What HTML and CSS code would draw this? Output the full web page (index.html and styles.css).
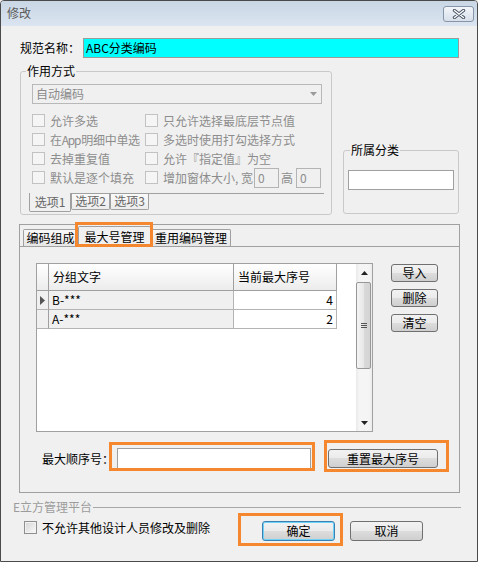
FILE: index.html
```html
<!DOCTYPE html>
<html lang="zh-CN">
<head>
<meta charset="utf-8">
<title>修改</title>
<link rel="stylesheet" href="styles.css">
</head>
<body>
<div class="window">
  <div class="titlebar">
    <span class="title">修改</span>
    <div class="close">
      <svg width="14" height="10" viewBox="0 0 14 10"><path d="M2.5 1.5 L11.5 8.5 M11.5 1.5 L2.5 8.5" stroke="#4a5566" stroke-width="3.4" stroke-linecap="round"/><path d="M2.5 1.5 L11.5 8.5 M11.5 1.5 L2.5 8.5" stroke="#ffffff" stroke-width="1.4" stroke-linecap="round"/></svg>
    </div>
  </div>
  <div class="content">
    <div class="name-row">
      <span class="name-label">规范名称：</span>
      <div class="field cyan">ABC分类编码</div>
    </div>

    <div class="groups">
      <fieldset class="group mode">
        <legend>作用方式</legend>
        <div class="combo">
          <span>自动编码</span>
          <svg class="combo-arrow" width="7" height="4" viewBox="0 0 7 4"><path d="M0 0 H7 L3.5 4 Z" fill="#9a9a9a"/></svg>
        </div>
        <div class="checks">
          <div class="chk"><span class="box"></span>允许多选</div>
          <div class="chk"><span class="box"></span>只允许选择最底层节点值</div>
          <div class="chk tight"><span class="box"></span>在<span class="latin">App</span>明细中单选</div>
          <div class="chk"><span class="box"></span>多选时使用打勾选择方式</div>
          <div class="chk"><span class="box"></span>去掉重复值</div>
          <div class="chk"><span class="box"></span>允许『指定值』为空</div>
          <div class="chk"><span class="box"></span>默认是逐个填充</div>
          <div class="chk"><span class="box"></span>增加窗体大小<span class="comma">,</span>宽<span class="num">0</span><span class="gao">高</span><span class="num">0</span></div>
        </div>
        <div class="btabs">
          <div class="btab active w1">选项1</div>
          <div class="btab w2">选项2</div>
          <div class="btab w3">选项3</div>
        </div>
      </fieldset>

      <fieldset class="group cat">
        <legend>所属分类</legend>
        <div class="field cat-input"></div>
      </fieldset>
    </div>

    <div class="panel">
      <div class="tabs">
        <div class="tab t1">编码组成</div>
        <div class="tab active t2">最大号管理</div>
        <div class="tab t3">重用编码管理</div>
      </div>
      <div class="page">
        <div class="page-main">
          <div class="grid">
            <div class="grid-body">
              <div class="grow ghead">
                <div class="gc ind"></div>
                <div class="gc c1">分组文字</div>
                <div class="gc c2">当前最大序号</div>
              </div>
              <div class="grow">
                <div class="gc ind"><svg width="5" height="9" viewBox="0 0 5 9"><path d="M0 0 L5 4.5 L0 9 Z" fill="#555"/></svg></div>
                <div class="gc c1">B-***</div>
                <div class="gc c2">4</div>
              </div>
              <div class="grow">
                <div class="gc ind"></div>
                <div class="gc c1">A-***</div>
                <div class="gc c2">2</div>
              </div>
            </div>
            <div class="vscroll">
              <div class="sarrow"><svg width="7" height="4" viewBox="0 0 7 4"><path d="M0 4 H7 L3.5 0 Z" fill="#222"/></svg></div>
              <div class="thumb">
                <span class="grip"></span><span class="grip"></span><span class="grip"></span>
              </div>
              <div class="sarrow down"><svg width="7" height="4" viewBox="0 0 7 4"><path d="M0 0 H7 L3.5 4 Z" fill="#222"/></svg></div>
            </div>
          </div>
          <div class="side">
            <div class="btn small">导入</div>
            <div class="btn small">删除</div>
            <div class="btn small">清空</div>
          </div>
        </div>
        <div class="max-row">
          <span class="max-label">最大顺序号：</span>
          <div class="field max-input hl"></div>
          <div class="btn reset hl">重置最大序号</div>
        </div>
      </div>
    </div>

    <div class="platform">
      <span class="platform-text">E立方管理平台</span>
      <div class="platform-line"></div>
    </div>

    <div class="footer">
      <div class="chk2"><span class="box2"></span>不允许其他设计人员修改及删除</div>
      <div class="footer-btns">
        <div class="btn big default hl">确定</div>
        <div class="btn big">取消</div>
      </div>
    </div>
  </div>
</div>
</body>
</html>
```

FILE: styles.css
```css
html, body {
  margin: 0;
  padding: 0;
  background: #f0f0f0;
}

body {
  font-family: "Noto Sans CJK SC", "Noto Sans", sans-serif;
  font-size: 12px;
  line-height: 14px;
  color: #000;
}

.window {
  width: 478px;
  height: 562px;
  box-sizing: border-box;
  border: 1px solid #4b4b4b;
  border-radius: 4px 4px 0 0;
  background: #f0f0f0;
  display: flex;
  flex-direction: column;
  overflow: hidden;
}

/* title bar */
.titlebar {
  flex: none;
  height: 25px;
  display: flex;
  align-items: flex-start;
  background: linear-gradient(#c9d6e4, #dbe5f1);
}

.title {
  margin: 5px 0 0 6px;
  line-height: 14px;
  color: #5b5b5b;
}

.close {
  margin: 5px 3px 0 auto;
  width: 31px;
  height: 16px;
  box-sizing: border-box;
  border: 1px solid #8795a8;
  border-radius: 3px;
  background: linear-gradient(#f3f6fa, #d7dfea);
  display: flex;
  align-items: center;
  justify-content: center;
}

/* content */
.content {
  flex: 1;
  padding: 0 17px 0 19px;
  display: flex;
  flex-direction: column;
}

.name-row {
  margin: 12px 1px 0 0;
  height: 20px;
  display: flex;
}

.name-label {
  width: 63px;
  line-height: 20px;
}

.field {
  box-sizing: border-box;
  height: 20px;
  border: 1px solid #a0a0a0;
  background: #fff;
  line-height: 18px;
  padding-left: 2px;
}

.cyan {
  flex: 1;
  background: #00ffff;
  border-color: #9a9a9a;
}

/* groups */
.groups {
  display: flex;
  align-items: flex-end;
  gap: 11px;
  margin: 6px 1px 0 0;
}

.group {
  box-sizing: border-box;
  margin: 0;
  padding: 0;
  border: 1px solid #c9c9c9;
  border-radius: 3px;
  min-inline-size: 0;
}

.group legend {
  padding: 0 1px;
  line-height: 14px;
  font-size: 12px;
}

.mode {
  width: 312px;
  padding-bottom: 2px;
}

.mode legend {
  margin-left: 5px;
}

.combo {
  margin: 6px 0 0 11px;
  width: 290px;
  height: 20px;
  box-sizing: border-box;
  border: 1px solid #b8b8b8;
  background: #f0f0f0;
  color: #8a8a8a;
  display: flex;
  align-items: center;
  justify-content: space-between;
  padding: 0 4px 0 3px;
}

.checks {
  display: grid;
  grid-template-columns: 113px auto;
  grid-auto-rows: 19px;
  margin: 7px 0 0 11px;
  color: #8d8d8d;
}

.chk {
  display: flex;
  align-items: center;
  white-space: nowrap;
}

.chk.tight {
  letter-spacing: -0.3px;
}

.latin {
  letter-spacing: -1.2px;
  margin-right: 1px;
}

.comma {
  display: inline-block;
  width: 6px;
}

.box {
  flex: none;
  width: 13px;
  height: 13px;
  box-sizing: border-box;
  border: 1px solid #c2c2c2;
  background: #f5f5f5;
  margin-right: 5px;
}

.num {
  box-sizing: border-box;
  width: 25px;
  height: 20px;
  border: 1px solid #b4b4b4;
  background: #f0f0f0;
  line-height: 18px;
  padding-left: 3px;
  margin-left: 1px;
}

.gao {
  margin: 0 2px;
}

.btabs {
  margin: 6px 7px 0 8px;
  height: 18px;
  border-top: 1px solid #a0a0a0;
  display: flex;
  align-items: flex-start;
}

.btab {
  box-sizing: border-box;
  height: 16px;
  border: 1px solid #a0a0a0;
  border-top: none;
  border-radius: 0 0 2px 2px;
  background: linear-gradient(#fafafa, #ececec);
  color: #666;
  text-align: center;
  line-height: 14px;
}

.btab.active {
  height: 19px;
  margin-top: -1px;
  background: #f0f0f0;
  line-height: 17px;
}

.w1 { width: 42px; }
.w2 { width: 39px; }
.w3 { width: 39px; }

.cat {
  width: 116px;
  margin-bottom: 1px;
  padding: 0 0 23px 4px;
}

.cat legend {
  margin-left: 2px;
}

.cat-input {
  margin-top: 13px;
  width: 106px;
}

/* page control */
.panel {
  margin: 9px 0 0 -1px;
  width: 441px;
  height: 269px;
  box-sizing: border-box;
  border: 1px solid #a0a0a0;
  display: flex;
  flex-direction: column;
}

.tabs {
  flex: none;
  height: 21px;
  display: flex;
  align-items: flex-end;
  padding-left: 3px;
}

.tab {
  box-sizing: border-box;
  height: 17px;
  border: 1px solid #a0a0a0;
  border-bottom: none;
  border-radius: 2px 2px 0 0;
  background: linear-gradient(#f8f8f8, #e6e6e6);
  text-align: center;
  line-height: 15px;
  white-space: nowrap;
}

.tab.active {
  position: relative;
  z-index: 1;
  height: 21px;
  margin-bottom: -1px;
  padding-top: 1px;
  line-height: 17px;
  background: #f0f0f0;
}

.t1 { width: 55px; }
.t2 { width: 73px; }
.t3 { width: 80px; }

.page {
  flex: 1;
  border-top: 1px solid #a0a0a0;
  display: flex;
  flex-direction: column;
}

.page-main {
  display: flex;
  align-items: flex-start;
  margin-top: 16px;
  padding-left: 16px;
}

.grid {
  width: 337px;
  height: 169px;
  box-sizing: border-box;
  border: 1px solid #a0a0a0;
  background: #fff;
  display: flex;
}

.grid-body {
  flex: 1;
}

.grow {
  display: flex;
  height: 19px;
}

.gc {
  box-sizing: border-box;
  border-right: 1px solid #b4b4b4;
  border-bottom: 1px solid #b4b4b4;
  background: #f0f0f0;
  line-height: 18px;
  white-space: nowrap;
}

.ind {
  width: 12px;
  border-right-color: #a0a0a0;
  display: flex;
  align-items: center;
  justify-content: center;
}

.c1 {
  width: 185px;
  padding-left: 3px;
}

.c2 {
  width: 103px;
  padding-right: 3px;
  text-align: right;
  background: #fff;
}

.ghead {
  height: 27px;
}

.ghead .gc {
  background: linear-gradient(#ffffff, #ececec);
  border-right-color: #a0a0a0;
  border-bottom-color: #a0a0a0;
  line-height: 26px;
}

.ghead .c1 {
  padding-left: 4px;
}

.ghead .c2 {
  text-align: left;
  padding-left: 4px;
}

.vscroll {
  width: 16px;
  display: flex;
  flex-direction: column;
  background: linear-gradient(to right, #e9e9e9, #f5f5f5 20%, #f5f5f5 80%, #ececec);
}

.sarrow {
  height: 17px;
  display: flex;
  align-items: center;
  justify-content: center;
}

.sarrow.down {
  margin-top: auto;
}

.thumb {
  margin-top: 1px;
  width: 15px;
  height: 87px;
  box-sizing: border-box;
  border: 1px solid #979797;
  border-radius: 2px;
  background: linear-gradient(to right, #f4f4f4, #e8e8e8 50%, #dadada 51%, #d4d4d4);
  display: flex;
  flex-direction: column;
  align-items: center;
  justify-content: center;
  gap: 1px;
}

.grip {
  width: 6px;
  height: 1px;
  background: #555;
}

.side {
  display: flex;
  flex-direction: column;
  gap: 7px;
  margin: 1px 0 0 18px;
}

.btn {
  box-sizing: border-box;
  border: 1px solid #707070;
  border-radius: 3px;
  background: linear-gradient(#f2f2f2 0%, #ebebeb 49%, #dddddd 50%, #cfcfcf 100%);
  text-align: center;
  white-space: nowrap;
}

.btn.small {
  width: 47px;
  height: 18px;
  line-height: 16px;
}

.max-row {
  display: flex;
  align-items: flex-start;
  margin-top: 16px;
  padding-left: 22px;
}

.max-label {
  width: 75px;
  line-height: 21px;
}

.max-input {
  width: 194px;
  height: 21px;
}

.btn.reset {
  width: 110px;
  height: 19px;
  line-height: 17px;
  margin: 1px 0 0 17px;
}

/* platform group */
.platform {
  display: flex;
  align-items: center;
  height: 14px;
  margin-top: 7px;
}

.platform-text {
  margin-left: -7px;
  color: #9c9c9c;
  line-height: 14px;
}

.platform-line {
  flex: 1;
  margin: 0 -1px 0 1px;
  border-top: 1px solid #a8a8a8;
}

.footer {
  display: flex;
  align-items: flex-start;
  margin-top: 7px;
}

.chk2 {
  margin-left: 4px;
  display: flex;
  align-items: center;
  line-height: 13px;
  white-space: nowrap;
}

.box2 {
  flex: none;
  width: 13px;
  height: 13px;
  box-sizing: border-box;
  border: 1px solid #8e8f8f;
  background: linear-gradient(135deg, #d4d4d4, #fbfbfb);
  box-shadow: inset 0 0 0 1px #f2f2f2;
  margin-right: 5px;
}

.footer-btns {
  margin: 0 37px 0 auto;
  display: flex;
  gap: 15px;
}

.btn.big {
  width: 73px;
  height: 20px;
  line-height: 18px;
}

.btn.default {
  border-color: #3c7fb1;
  box-shadow: inset 0 0 0 1px #6fd3f7;
}

/* orange annotation frames */
.hl {
  position: relative;
}

.hl::after,
.tab.active::after {
  content: "";
  position: absolute;
  border: 3px solid #f5872f;
  pointer-events: none;
}

.tab.active::after {
  top: -5px;
  left: -4px;
  right: -3px;
  bottom: 0;
}

.max-input::after {
  top: -7px;
  left: -9px;
  right: -5px;
  bottom: -3px;
}

.btn.reset::after {
  top: -10px;
  left: -5px;
  right: -12px;
  bottom: -5px;
}

.btn.default::after {
  top: -9px;
  left: -25px;
  right: -9px;
  bottom: -6px;
}
```
